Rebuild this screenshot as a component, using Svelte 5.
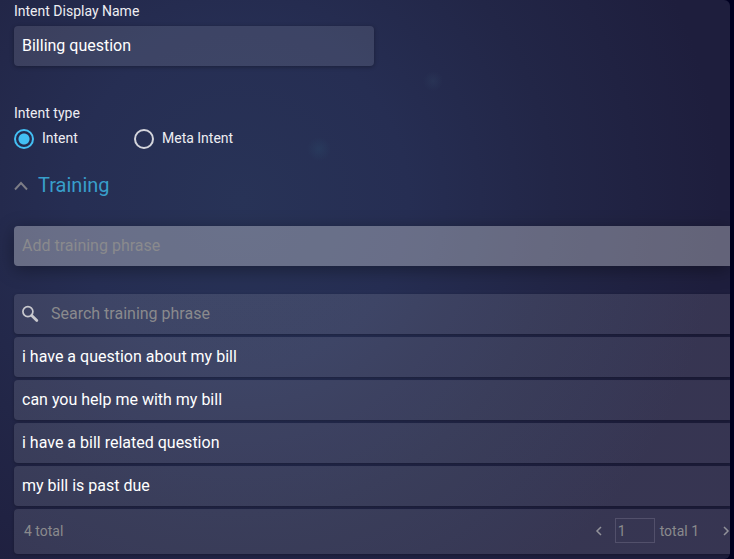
<script>
  let displayName = $state('Billing question');
  let intentType = $state('intent');
  let newPhrase = $state('');
  let search = $state('');
  let page = $state('1');
  let open = $state(true);
  const phrases = [
    'i have a question about my bill',
    'can you help me with my bill',
    'i have a bill related question',
    'my bill is past due'
  ];
</script>

<div class="shell">
  <main class="panel">
    <label class="caption" for="display-name">Intent Display Name</label>
    <input id="display-name" class="field name" type="text" bind:value={displayName} />

    <fieldset class="types">
      <legend class="caption">Intent type</legend>
      <div class="options">
        <label class="option">
          <input type="radio" name="type" value="intent" bind:group={intentType} />
          <span>Intent</span>
        </label>
        <label class="option">
          <input type="radio" name="type" value="meta" bind:group={intentType} />
          <span>Meta Intent</span>
        </label>
      </div>
    </fieldset>

    <h2>
      <button class="toggle" type="button" aria-expanded={open} onclick={() => (open = !open)}>
        <svg width="14" height="12" viewBox="0 0 14 12" aria-hidden="true">
          <path d="M1 10.5 7 4l6 6.5" fill="none" stroke="#7d7d86" stroke-width="1.9" />
        </svg>
        Training
      </button>
    </h2>

    {#if open}
      <input class="field add" type="text" placeholder="Add training phrase" aria-label="Add training phrase" bind:value={newPhrase} />

      <section class="list">
        <label class="row search">
          <svg width="18" height="18" viewBox="0 0 18 18" aria-hidden="true">
            <circle cx="5.9" cy="6.6" r="5" fill="none" stroke="#c9c9ce" stroke-width="1.7" />
            <path d="m9.7 10.4 5.1 5.1" stroke="#c9c9ce" stroke-width="2.8" stroke-linecap="round" />
          </svg>
          <input type="text" placeholder="Search training phrase" aria-label="Search training phrase" bind:value={search} />
        </label>
        {#each phrases as phrase}
          <div class="row">{phrase}</div>
        {/each}
        <footer class="row pager">
          <span class="count">{phrases.length} total</span>
          <button type="button" class="arrow" aria-label="Previous page">
            <svg width="8" height="10" viewBox="0 0 8 10" aria-hidden="true"><path d="M6 1 2 5l4 4" /></svg>
          </button>
          <input class="page" type="text" aria-label="Page" bind:value={page} />
          <span>total 1</span>
          <button type="button" class="arrow next" aria-label="Next page">
            <svg width="8" height="10" viewBox="0 0 8 10" aria-hidden="true"><path d="m2 1 4 4-4 4" /></svg>
          </button>
        </footer>
      </section>
    {/if}
  </main>
</div>

<style>
  :global(body) {
    background: #000020;
  }
  .shell {
    min-height: 100vh;
    box-sizing: border-box;
    padding-right: 4px;
    font-family: Roboto, sans-serif;
    font-size: 16px;
    color: #fff;
  }
  .panel {
    display: flex;
    flex-direction: column;
    min-height: 100vh;
    box-sizing: border-box;
    padding: 2px 0 5px 14px;
    border-radius: 0 6px 6px 0;
    background:
      radial-gradient(circle at 319px 149px, rgba(45, 85, 115, 0.25), transparent 12px),
      radial-gradient(circle at 433px 81px, rgba(50, 70, 100, 0.3), transparent 10px),
      radial-gradient(ellipse 480px 480px at 240px 200px, #283357 0%, #262e53 35%, #222647 65%, #1e1e3d 100%);
  }
  input,
  button {
    font: inherit;
    color: inherit;
  }
  .caption {
    padding: 0;
    font-size: 14px;
    line-height: 18px;
    color: #eeeef2;
  }
  .field {
    box-sizing: border-box;
    height: 40px;
    padding: 0 8px 2px;
    border: 0;
    outline: 0;
  }
  .name {
    width: 360px;
    max-width: 100%;
    margin-top: 6px;
    border-radius: 4px;
    background: rgba(255, 255, 255, 0.11);
    box-shadow: 0 1px 4px rgba(0, 0, 0, 0.3);
  }
  .types {
    margin: 38px 0 0;
    padding: 0;
    border: 0;
  }
  .options {
    display: flex;
    margin-top: 7px;
  }
  .option {
    display: flex;
    align-items: center;
    gap: 8px;
    width: 120px;
    height: 20px;
    font-size: 14px;
    color: #eeeef2;
  }
  .option span {
    padding-bottom: 2px;
  }
  .option input {
    appearance: none;
    box-sizing: border-box;
    width: 20px;
    height: 20px;
    margin: 0;
    border: 2px solid #d4d5dc;
    border-radius: 50%;
  }
  .option input:checked {
    border-color: #43bff3;
    background: radial-gradient(circle, #43bff3 5px, transparent 6px);
  }
  h2 {
    margin: 24px 0 0;
    font-size: 20px;
    font-weight: 400;
    line-height: 24px;
  }
  .toggle {
    display: flex;
    align-items: center;
    gap: 10px;
    padding: 0;
    border: 0;
    background: none;
    color: #389fcb;
  }
  .add {
    width: 100%;
    margin-top: 29px;
    border-radius: 4px 0 0 4px;
    background: rgba(255, 255, 255, 0.31);
    box-shadow: 0 4px 18px rgba(0, 0, 0, 0.35);
  }
  .field::placeholder,
  .search input::placeholder {
    color: #8a8a8d;
    opacity: 1;
  }
  .list {
    display: flex;
    flex-direction: column;
    gap: 3px;
    margin-top: 28px;
  }
  .row {
    display: flex;
    align-items: center;
    box-sizing: border-box;
    height: 40px;
    padding: 0 8px 2px;
    border-radius: 4px 0 0 4px;
    background: linear-gradient(90deg, rgba(255, 255, 255, 0.11) 60%, rgba(255, 240, 255, 0.11));
    box-shadow: 0 1px 3px rgba(0, 0, 0, 0.25);
  }
  .search {
    gap: 11px;
  }
  .search svg {
    padding-top: 2px;
  }
  .search input {
    flex: 1;
    min-width: 0;
    padding: 0;
    border: 0;
    outline: 0;
    background: none;
  }
  .pager {
    height: 45px;
    padding: 0 0 2px 10px;
    font-size: 14px;
    color: #8a8a8d;
  }
  .count {
    flex: 1;
  }
  .arrow {
    display: flex;
    padding: 0;
    border: 0;
    background: none;
  }
  .arrow path {
    fill: none;
    stroke: #92929a;
    stroke-width: 1.5;
  }
  .next {
    margin-left: 23px;
  }
  .page {
    box-sizing: border-box;
    width: 40px;
    height: 25px;
    margin: 0 5px 0 12px;
    padding: 0 2px;
    border: 1px solid #52506b;
    background: none;
  }
</style>
